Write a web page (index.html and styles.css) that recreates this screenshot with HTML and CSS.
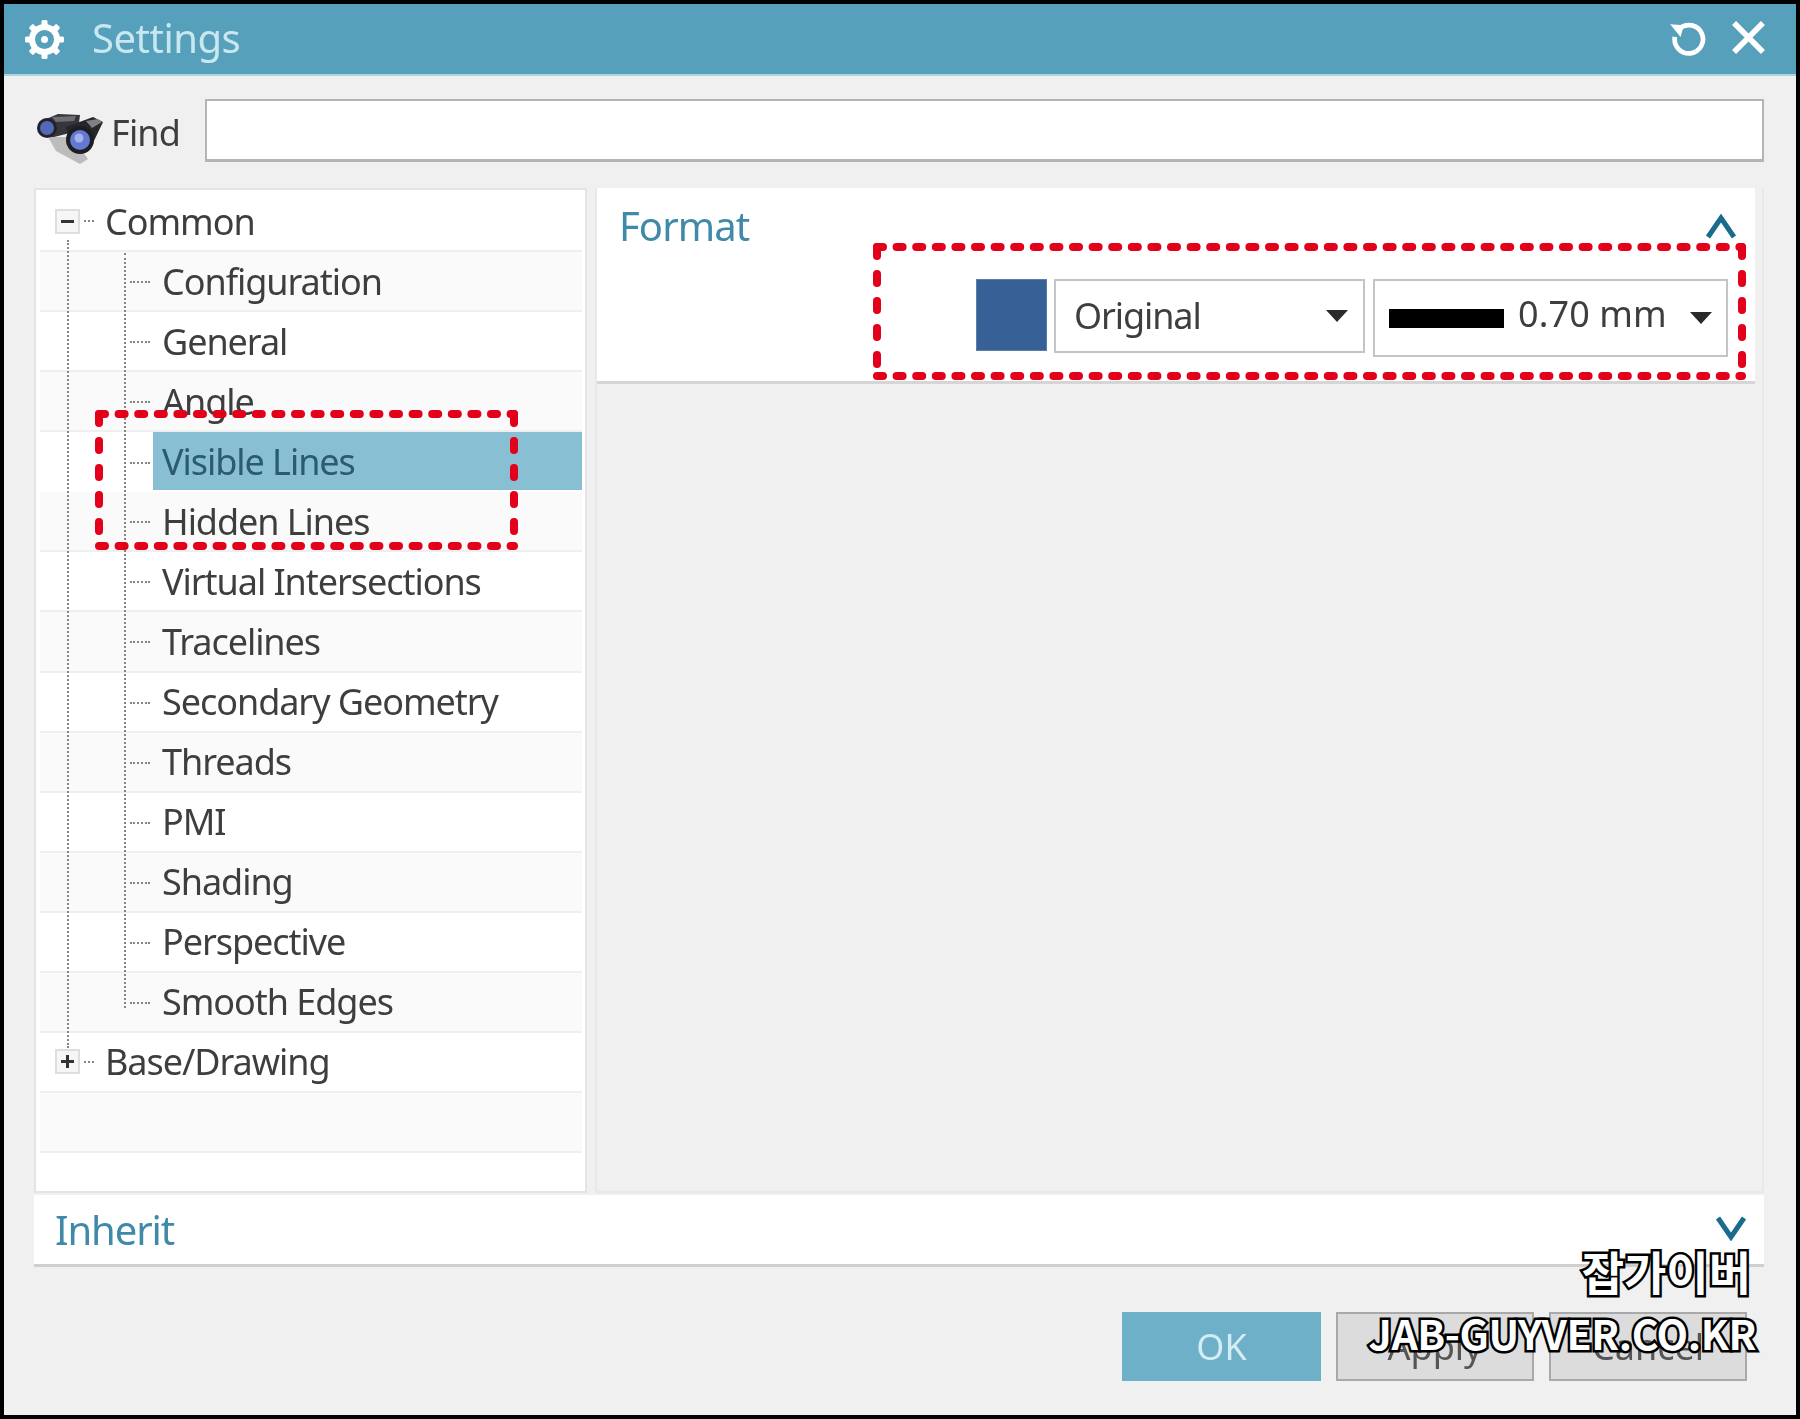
FILE: index.html
```html
<!DOCTYPE html>
<html lang="en">
<head>
<meta charset="utf-8">
<title>Settings</title>
<link rel="stylesheet" href="styles.css">
</head>
<body>
<div class="stage">
  <div class="window">
    <header class="titlebar">
      <svg class="gear" viewBox="0 0 41 41" aria-hidden="true">
        <circle cx="20.5" cy="20.5" r="12.5" fill="none" stroke="#fff" stroke-width="6"/>
        <circle cx="20.5" cy="20.5" r="3.5" fill="#fff"/>
        <g fill="#fff">
          <rect x="17.5" y="1" width="6" height="6" rx="1.5"/>
          <rect x="17.5" y="34" width="6" height="6" rx="1.5"/>
          <rect x="1" y="17.5" width="6" height="6" rx="1.5"/>
          <rect x="34" y="17.5" width="6" height="6" rx="1.5"/>
          <rect x="17.5" y="1" width="6" height="6" rx="1.5" transform="rotate(45 20.5 20.5)"/>
          <rect x="17.5" y="34" width="6" height="6" rx="1.5" transform="rotate(45 20.5 20.5)"/>
          <rect x="1" y="17.5" width="6" height="6" rx="1.5" transform="rotate(45 20.5 20.5)"/>
          <rect x="34" y="17.5" width="6" height="6" rx="1.5" transform="rotate(45 20.5 20.5)"/>
        </g>
      </svg>
      <span class="title">Settings</span>
      <svg class="restore" viewBox="0 0 40 32" aria-hidden="true">
        <path d="M11 6 A13.5 13.5 0 1 1 6.5 14" fill="none" stroke="#fff" stroke-width="4.5"/>
        <path d="M2 2 L15 3 L12 14 Z" fill="#fff"/>
      </svg>
      <svg class="close" viewBox="0 0 32 32" aria-hidden="true">
        <path d="M2 2 L30 30 M30 2 L2 30" fill="none" stroke="#fff" stroke-width="5.5"/>
      </svg>
    </header>

    <div class="findbar">
      <svg class="binoculars" viewBox="0 0 68 52" aria-hidden="true">
        <path d="M12 24 L36 24 L52 46 L44 51 L20 38 Z" fill="#bcbcbc"/>
        <path d="M3 9 L22 1 L44 2 L42 18 L18 24 L8 24 Z" fill="#35353b"/>
        <path d="M30 14 L57 4 L67 9 L56 32 L48 40 L34 30 Z" fill="#26262c"/>
        <path d="M16 4 L40 3 L38 8 L20 9 Z" fill="#6e6e73"/>
        <path d="M50 8 L62 6 L66 9 L56 15 Z" fill="#808085"/>
        <circle cx="11" cy="15" r="10" fill="#22222a"/>
        <circle cx="11" cy="15" r="7" fill="#5468b8"/>
        <circle cx="44" cy="27" r="14" fill="#1d1d24"/>
        <circle cx="44" cy="27" r="10" fill="#6578d2"/>
        <circle cx="43" cy="25" r="4.5" fill="#a5b2ee"/>
      </svg>
      <label class="find-label" for="find">Find</label>
      <input class="find-input" id="find" type="text">
    </div>

    <main class="body">
      <nav class="tree">
        <span class="trunk"></span>
        <span class="branch"></span>
        <div class="row root">
          <span class="box"><i class="minus"></i></span><span class="stub"></span><span class="text">Common</span>
        </div>
        <div class="row child alt"><span class="text">Configuration</span></div>
        <div class="row child"><span class="text">General</span></div>
        <div class="row child alt"><span class="text">Angle</span></div>
        <div class="row child selected"><span class="text">Visible Lines</span></div>
        <div class="row child alt"><span class="text">Hidden Lines</span></div>
        <div class="row child"><span class="text">Virtual Intersections</span></div>
        <div class="row child alt"><span class="text">Tracelines</span></div>
        <div class="row child"><span class="text">Secondary Geometry</span></div>
        <div class="row child alt"><span class="text">Threads</span></div>
        <div class="row child"><span class="text">PMI</span></div>
        <div class="row child alt"><span class="text">Shading</span></div>
        <div class="row child"><span class="text">Perspective</span></div>
        <div class="row child alt"><span class="text">Smooth Edges</span></div>
        <div class="row root">
          <span class="box"><i class="minus"></i><i class="vert"></i></span><span class="stub"></span><span class="text">Base/Drawing</span>
        </div>
        <div class="row alt"></div>
      </nav>

      <section class="panel">
        <div class="format">
          <div class="format-head">
            <span class="section-title">Format</span>
            <svg class="chev-up" viewBox="0 0 32 25" aria-hidden="true"><path d="M3 23 L16 4 L29 23" fill="none" stroke="#1b6b8c" stroke-width="5"/></svg>
          </div>
          <div class="format-controls">
            <span class="swatch"></span>
            <div class="select select-colour"><span class="select-text">Original</span><span class="arrow"></span></div>
            <div class="select select-line"><span class="line-sample"></span><span class="select-text">0.70 mm</span><span class="arrow"></span></div>
          </div>
        </div>
      </section>
    </main>

    <section class="inherit">
      <span class="section-title">Inherit</span>
      <svg class="chev-down" viewBox="0 0 32 26" aria-hidden="true"><path d="M3 3 L16 22 L29 3" fill="none" stroke="#1b6b8c" stroke-width="5"/></svg>
    </section>

    <footer class="actions">
      <button class="btn primary" type="button">OK</button>
      <button class="btn" type="button">Apply</button>
      <button class="btn" type="button">Cancel</button>
    </footer>
  </div>

  <svg class="marks" viewBox="0 0 1800 1419" aria-hidden="true">
    <g fill="none" stroke="#e2001a" stroke-width="8" stroke-linecap="round">
      <path class="dash-h" d="M99 414 H514"/>
      <path class="dash-h" d="M99 546 H514"/>
      <path class="dash-v" d="M99 414 V546"/>
      <path class="dash-v" d="M514 414 V546"/>
      <path class="dash-h" d="M877 247 H1742"/>
      <path class="dash-h" d="M877 376 H1742"/>
      <path class="dash-v" d="M877 247 V376"/>
      <path class="dash-v" d="M1742 247 V376"/>
    </g>
  </svg>

  <div class="watermark">
    <span class="wm-ko" lang="ko">잡가이버</span>
    <span class="wm-en">JAB-GUYVER.CO.KR</span>
  </div>
</div>
</body>
</html>
```
FILE: styles.css
```css
* { box-sizing: border-box; }
html, body { margin: 0; padding: 0; background: #000; }
body { font-family: "Noto Sans", "Liberation Sans", sans-serif; color: #3e3e3e; }

.stage { position: relative; width: 1800px; height: 1419px; overflow: hidden; }

.window {
  width: 1792px; height: 1411px;
  margin: 4px;
  position: absolute;
  background: #f0f0f0;
  display: flex; flex-direction: column;
  filter: blur(0.7px);
}

.titlebar {
  height: 72px; flex: none;
  background: #57a0bb;
  border-bottom: 2px solid #a9d4e2;
  display: flex; align-items: center;
  padding: 0 31px 0 20px;
}
.gear { width: 41px; height: 41px; flex: none; }
.title { font-size: 40px; color: #c9e7ef; margin-left: 27px; flex: 1; line-height: 1; position: relative; top: -1px; letter-spacing: -0.5px; }
.restore { width: 42px; height: 34px; margin-right: 22px; }
.close { width: 33px; height: 33px; position: relative; top: -2px; }

.findbar { height: 63px; margin: 23px 32px 0 32px; display: flex; align-items: center; flex: none; }
.binoculars { width: 68px; height: 52px; flex: none; position: relative; top: 8px; }
.find-label { font-size: 36px; margin-left: 7px; width: 94px; flex: none; letter-spacing: -0.8px; position: relative; top: 2px; }
.find-input { flex: 1; height: 63px; background: #fff; border: 2px solid #b4b4b4; border-bottom-width: 3px; outline: none; }

.body { display: flex; gap: 8px; height: 1005px; margin: 26px 32px 0 30px; flex: none; }

.tree {
  position: relative;
  width: 553px; flex: none;
  background: #fff;
  border: 2px solid #e4e4e4;
  padding: 2px 3px 0 4px;
}
.trunk { position: absolute; z-index: 1; left: 31px; top: 50px; height: 808px; border-left: 2px dotted #858585; }
.branch { position: absolute; z-index: 1; left: 88px; top: 63px; height: 755px; border-left: 2px dotted #858585; }

.row {
  position: relative;
  height: 60.07px;
  border-bottom: 2px solid #efefef;
  display: flex; align-items: center;
  font-size: 36px;
  letter-spacing: -1.05px;
  white-space: nowrap;
}
.alt { background: #fafafa; }
.root { padding-left: 15px; }
.child { padding-left: 113px; }
.child::before {
  content: ""; position: absolute; left: 90px; top: 50%; width: 20px;
  border-top: 2px dotted #858585;
}
.child .text { flex: 1; height: 100%; padding-left: 9px; display: flex; align-items: center; position: relative; }
.child .text::first-line { line-height: 1; }
.selected { border-bottom: 0; padding-bottom: 2px; }
.selected .text { background: #89bfd3; color: #2c5a70; }

.box {
  position: relative; width: 25px; height: 25px; flex: none;
  background: #f6f6f6; border: 2px solid #dedede;
}
.minus { position: absolute; left: 4px; top: 9px; width: 13px; height: 3px; background: #333; }
.vert { position: absolute; left: 9px; top: 4px; width: 3px; height: 13px; background: #333; }
.stub { width: 10px; margin: 0 11px 0 4px; border-top: 2px dotted #858585; }

.panel { flex: 1; background: #f0f0f0; border: 2px solid #e8e8e8; border-top: 0; padding-right: 7px; }
.format {
  height: 196px; background: #fff;
  border-bottom: 3px solid #d6d6d6;
  display: flex; flex-direction: column;
  padding: 0 18px 0 22px;
}
.format-head { height: 78px; display: flex; justify-content: space-between; align-items: center; flex: none; }
.section-title { font-size: 40px; color: #3f8aa8; letter-spacing: -0.9px; position: relative; top: -2px; }
.chev-up { width: 32px; height: 25px; position: relative; top: -1px; }
.format-controls { display: flex; justify-content: flex-end; padding-top: 13px; padding-right: 9px; gap: 7px; align-items: flex-start; }
.swatch { width: 71px; height: 72px; background: #376196; border: 1px solid #5d7ea8; flex: none; }
.select {
  display: flex; align-items: center;
  background: #fff; border: 2px solid #c4c4c4;
  font-size: 36px; letter-spacing: -1.1px;
}
.select-colour { width: 311px; height: 74px; padding: 0 15px 0 18px; margin-right: 1px; }
.select-line { width: 355px; height: 78px; padding: 0 14px; letter-spacing: 0.1px; }
.select-text { flex: 1; position: relative; top: -1px; }
.select-line .select-text { margin-left: 14px; top: -5px; }
.line-sample { width: 115px; height: 19px; background: #000; flex: none; }
.arrow { width: 0; height: 0; border-left: 11px solid transparent; border-right: 11px solid transparent; border-top: 12px solid #2a2a2a; flex: none; }

.inherit {
  height: 72px; flex: none;
  margin: 2px 32px 0 30px;
  background: #fff;
  border-bottom: 3px solid #cfcfcf;
  display: flex; align-items: center; justify-content: space-between;
  padding: 0 17px 0 21px;
}
.inherit .section-title { top: 0; letter-spacing: -1.1px; }
.chev-down { width: 32px; height: 26px; position: relative; top: -2px; }

.actions { display: flex; justify-content: flex-end; gap: 15px; margin-top: 45px; padding-right: 49px; }
.btn {
  width: 198px; height: 69px;
  font: 36px "Noto Sans", "Liberation Sans", sans-serif;
  color: #555;
  background: #dcdcdc; border: 2px solid #a9a9a9; padding: 0;
}
.primary { width: 199px; background: #6fb0c9; border-color: #6fb0c9; color: #d4ecf3; }

.marks { position: absolute; left: 0; top: 0; width: 1800px; height: 1419px; filter: blur(0.6px); pointer-events: none; }
.dash-h { stroke-dasharray: 6 13.6; }
.dash-v { stroke-dasharray: 9 18; }

.watermark {
  position: absolute; right: 44px; top: 1247px;
  display: flex; flex-direction: column; align-items: flex-end;
  font-family: "Noto Sans CJK KR", "Noto Sans", sans-serif;
  font-weight: 700;
  color: #fff;
  paint-order: stroke fill;
  -webkit-text-stroke: 5px #000;
  line-height: 1;
}
.wm-ko { font-size: 46px; height: 65px; padding-right: 5px; }
.wm-en { font-size: 41px; letter-spacing: -0.4px; }
```
